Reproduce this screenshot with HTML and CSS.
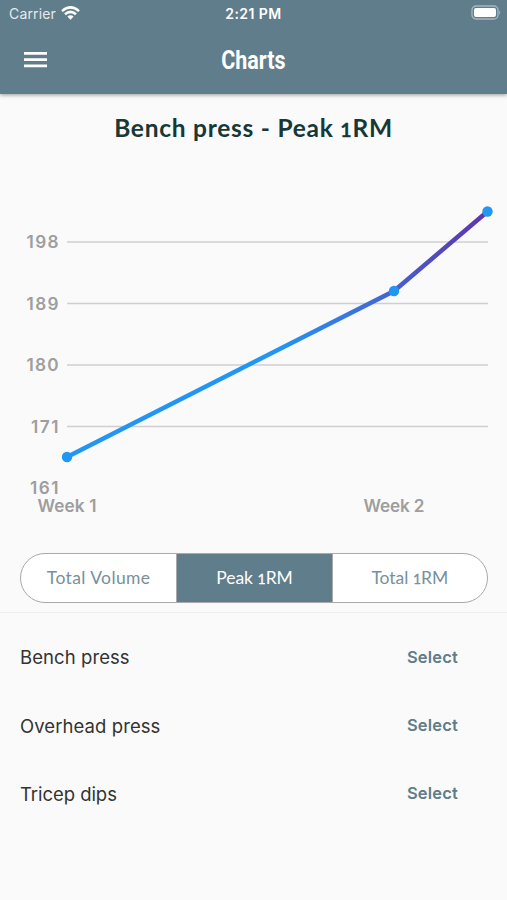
FILE: index.html
```html
<!DOCTYPE html>
<html lang="en">
<head>
<meta charset="utf-8">
<meta name="viewport" content="width=device-width, initial-scale=1">
<title>Charts</title>
<link rel="stylesheet" href="styles.css">
</head>
<body>
<header class="header">
  <div class="status">
    <div class="carrier"><span>Carrier</span>
      <svg width="19" height="14" viewBox="0 0 19 14" fill="none" stroke="#fff" stroke-width="2.5"><path d="M1 5.1Q9.500-2.300 18 5.100"/><path d="M4 8.300Q9.500 3.500 15 8.300"/><path d="M6.300 10.500Q9.500 7.900 12.700 10.500L9.500 13.800Z" fill="#fff" stroke="none"/></svg>
    </div>
    <time class="clock">2:21 PM</time>
    <svg class="battery" width="31" height="16" viewBox="0 0 31 16"><rect x="1" y="1" width="26" height="13" rx="4" fill="none" stroke="#a8b8c1" stroke-width="1.3"/><rect x="3" y="3" width="22" height="9" rx="2" fill="#fff"/><path d="M28.300 5.200Q30.300 7.500 28.300 9.800Z" fill="#a8b8c1"/></svg>
  </div>
  <div class="toolbar">
    <svg class="menu" width="23" height="16" viewBox="0 0 23 16" fill="#fff"><path d="M0 0h23v2.700H0zM0 6.300h23V9H0zM0 12.600h23v2.700H0z"/></svg>
    <h1 class="title">Charts</h1>
  </div>
</header>
<main>
  <h2 class="heading">Bench press - Peak <span class="low">1</span>RM</h2>
  <svg class="chart" width="507" height="380" viewBox="0 150 507 380">
    <defs>
      <linearGradient id="trend" gradientUnits="userSpaceOnUse" x1="67" y1="0" x2="487" y2="0">
        <stop offset="0" stop-color="#2196f3"/><stop offset=".5" stop-color="#2196f3"/><stop offset=".75" stop-color="#4169d7"/><stop offset=".9" stop-color="#5545b8"/><stop offset="1" stop-color="#5e35b1"/>
      </linearGradient>
    </defs>
    <path class="grid" d="M67 242H488M67 303.500H488M67 365H488M67 426.500H488"/>
    <g class="axis">
      <text x="26.500" y="248" textLength="32">198</text>
      <text x="26.500" y="309.500" textLength="32">189</text>
      <text x="26.500" y="371" textLength="32">180</text>
      <text x="31" y="432.500" textLength="27.500">171</text>
      <text x="30" y="494" textLength="28.500">161</text>
      <text x="37.500" y="511.500" textLength="59">Week 1</text>
      <text x="363.500" y="511.500" textLength="61">Week 2</text>
    </g>
    <path class="line" d="M67 457L394 291L487.500 211.500"/>
    <g fill="#2196f3"><circle cx="67" cy="457" r="5.200"/><circle cx="394" cy="291" r="5.200"/><circle cx="487.500" cy="211.500" r="5.200"/></g>
  </svg>
  <div class="tabs">
    <button class="tab volume">Total Volume</button>
    <button class="tab active">Peak <span class="low">1</span>RM</button>
    <button class="tab">Total <span class="low">1</span>RM</button>
  </div>
  <ul class="list">
    <li class="row"><span class="bench">Bench press</span><button class="select">Select</button></li>
    <li class="row"><span class="overhead">Overhead press</span><button class="select">Select</button></li>
    <li class="row"><span class="dips">Tricep dips</span><button class="select">Select</button></li>
  </ul>
</main>
</body>
</html>
```
FILE: styles.css
```css
* { box-sizing: border-box; }
body { margin: 0; height: 900px; overflow: hidden; background: #fafafa; font-family: Inter, sans-serif; }
button { border: 0; padding: 0; background: none; }
.header { height: 94px; background: #607d8b; color: #fff; box-shadow: 0 1px 4px rgba(0,0,0,.4); }
.status { height: 27px; display: grid; grid-template-columns: 1fr auto 1fr; align-items: center; padding: 0 4px 0 9px; font-size: 14px; }
.carrier { display: flex; align-items: center; gap: 6px; color: #e4eaed; letter-spacing: .15px; }
.carrier svg { margin: -1px 0 0 -1px; }
.clock { font-size: 14px; font-weight: 600; letter-spacing: .45px; margin-left: -5px; }
.battery { justify-self: end; margin: -1px 1px 0 0; }
.toolbar { height: 67px; display: grid; grid-template-columns: 1fr auto 1fr; align-items: center; padding: 0 24px; }
.menu { margin-top: -1px; }
.title { margin: 0; font: 700 25px/30px Roboto, sans-serif; transform: scaleX(.86); }
.heading { height: 56px; margin: 0; padding-top: 19px; text-align: center; font: 700 24.500px/30px Lato, sans-serif; letter-spacing: .75px; color: #163836; }
.low { font-size: .8em; -webkit-text-stroke: .3px currentColor; }
.chart { display: block; }
.grid { stroke: #cfcfcf; stroke-width: 1.300; }
.axis { font: 600 17.200px Inter, sans-serif; fill: #9e9e9e; }
.line { fill: none; stroke: url(#trend); stroke-width: 4.500; }
.tabs { height: 50px; margin: 23px 19px 9px 20px; display: grid; grid-template-columns: repeat(3, 1fr); border: 1px solid #a9a9a9; border-radius: 25px; overflow: hidden; background: #fff; }
.tab { display: block; font: 400 17.500px/48px Lato, sans-serif; color: #78909c; }
.tab + .tab { border-left: 1px solid #a9a9a9; }
.tab .low { line-height: 1; }
.volume { letter-spacing: .4px; }
.active { background: #607d8b; color: #fff; }
.list { margin: 0; padding: 10px 20px; list-style: none; border-top: 1px solid #eee; }
.row { height: 68.400px; display: flex; align-items: center; justify-content: space-between; font-size: 18.500px; letter-spacing: .08px; color: #333; }
.dips { letter-spacing: -.05px; }
.select { width: 109px; margin-top: -1px; font: 600 16.500px Inter, sans-serif; letter-spacing: .2px; color: #607d8b; }
```
